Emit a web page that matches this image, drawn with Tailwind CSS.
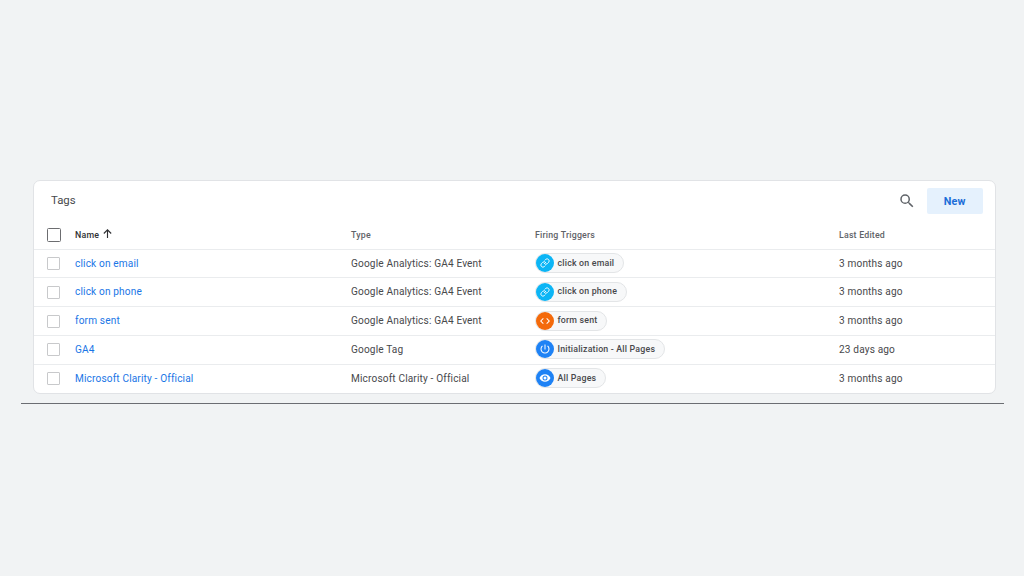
<!DOCTYPE html>
<html lang="en">
<head>
    <meta charset="UTF-8">
    <meta name="viewport" content="width=device-width, initial-scale=1.0">
    <title>Tags</title>
    <script src="https://cdn.jsdelivr.net/npm/@tailwindcss/browser@4"></script>
</head>
<body class="h-screen overflow-hidden bg-[#f1f3f4] pt-[180px] font-['Roboto','Liberation_Sans',sans-serif] text-[#48494c]">

    <!-- Icon definitions -->
    <svg class="hidden">
        <symbol id="link" viewBox="0 0 24 24">
            <g fill="none" stroke="currentColor" stroke-width="2.2" stroke-linecap="round" stroke-linejoin="round">
                <path d="M10 13a5 5 0 0 0 7.54.54l3-3a5 5 0 0 0-7.07-7.07l-1.72 1.71"/>
                <path d="M14 11a5 5 0 0 0-7.54-.54l-3 3a5 5 0 0 0 7.07 7.07l1.71-1.71"/>
            </g>
        </symbol>
        <symbol id="code" viewBox="0 0 24 24">
            <path fill="currentColor" d="M9.4 16.6 4.8 12l4.6-4.6L8 6l-6 6 6 6zm5.2 0 4.6-4.6-4.6-4.6L16 6l6 6-6 6z"/>
        </symbol>
        <symbol id="power" viewBox="0 0 24 24">
            <path fill="currentColor" d="M13 3h-2v10h2zm4.83 2.17-1.42 1.42A6.92 6.92 0 0 1 19 12a7 7 0 1 1-11.42-5.42L6.17 5.17A8.93 8.93 0 0 0 3 12a9 9 0 0 0 18 0c0-2.74-1.23-5.18-3.17-6.83z"/>
        </symbol>
        <symbol id="eye" viewBox="0 0 24 24">
            <path fill="currentColor" d="M12 4.5C7 4.5 2.73 7.61 1 12c1.73 4.39 6 7.5 11 7.5s9.27-3.11 11-7.5c-1.73-4.39-6-7.5-11-7.5zM12 17a5 5 0 1 1 0-10 5 5 0 0 1 0 10zm0-8a3 3 0 1 0 0 6 3 3 0 0 0 0-6z"/>
        </symbol>
    </svg>

    <!-- Tags card -->
    <div class="ml-[33px] w-[963px] h-[214px] overflow-hidden rounded-[7px] border border-[#e1e3e6] bg-white">
        <div class="flex h-[40px] items-center pl-[17px] pr-[12px]">
            <h1 class="flex-1 pb-[2px] text-[11.4px] leading-4 tracking-normal">Tags</h1>
            <svg class="mr-[11px] -mt-px size-[18px] text-[#5f6368]" viewBox="0 0 24 24">
                <path fill="currentColor" d="M15.5 14h-.79l-.28-.27A6.471 6.471 0 0 0 16 9.5 6.5 6.5 0 1 0 9.5 16c1.61 0 3.09-.59 4.23-1.57l.27.28v.79l5 4.99L20.49 19zm-6 0a4.5 4.5 0 1 1 0-9 4.5 4.5 0 0 1 0 9z"/>
            </svg>
            <button class="h-[26px] w-[56.5px] rounded-[2px] bg-[#e5f1fd] pt-[2px] text-[10.8px] font-bold tracking-[0.2px] text-[#1c6dd8]">New</button>
        </div>

        <div class="grid h-[27.6px] grid-cols-[41px_276px_184px_304px_1fr] items-center pt-px text-[8.8px] font-medium tracking-[0.2px] text-[#5f6368]">
            <span class="-mt-px ml-[13px] size-[14px] rounded-[1.5px] border-[1.5px] border-[#6c6d70]"></span>
            <span class="flex items-center gap-[3px] text-[#303134]">Name
                <svg class="-mt-[3px] size-[11px]" viewBox="0 0 24 24"><path d="M12 22V4M4 12l8-8 8 8" fill="none" stroke="currentColor" stroke-width="2.5"/></svg>
            </span>
            <span>Type</span>
            <span>Firing Triggers</span>
            <span>Last Edited</span>
        </div>

        <div id="rows" class="text-[10.1px] tracking-[0.15px]"></div>
    </div>

    <div class="ml-[21px] mt-[9px] h-px w-[983px] bg-[#6b6d72]"></div>

    <script>
        const tags = [
            ['click on email', 'Google Analytics: GA4 Event', 'link', 'bg-[#0cb5f5]', 'click on email', '3 months ago'],
            ['click on phone', 'Google Analytics: GA4 Event', 'link', 'bg-[#0cb5f5]', 'click on phone', '3 months ago'],
            ['form sent', 'Google Analytics: GA4 Event', 'code', 'bg-[#f46a0b]', 'form sent', '3 months ago'],
            ['GA4', 'Google Tag', 'power', 'bg-[#1e82f5]', 'Initialization - All Pages', '23 days ago'],
            ['Microsoft Clarity - Official', 'Microsoft Clarity - Official', 'eye', 'bg-[#1e82f5]', 'All Pages', '3 months ago'],
        ];

        document.getElementById('rows').innerHTML = tags.map(([name, type, icon, color, trigger, edited]) => `
            <div class="grid h-[28.8px] grid-cols-[41px_276px_184px_304px_1fr] items-center border-t border-[#eaecee] pb-[0.8px]">
                <span class="mt-[0.8px] ml-[13px] size-[13px] rounded-[1px] border border-[#c8c9cb]"></span>
                <a class="text-[#1a76e6]">${name}</a>
                <span>${type}</span>
                <span class="flex">
                    <span class="flex h-[20px] items-center rounded-full border border-[#e3e5e7] bg-[#f7f8f9] pr-[8.5px] text-[8.8px] font-medium tracking-[0.19px]">
                        <span class="-ml-[0.5px] mr-[4px] flex size-[18px] items-center justify-center rounded-full text-white ${color}">
                            <svg class="${icon === 'link' ? 'size-[10px]' : 'size-[12px]'}"><use href="#${icon}"/></svg>
                        </span>${trigger}
                    </span>
                </span>
                <span>${edited}</span>
            </div>`).join('');
    </script>

</body>
</html>
